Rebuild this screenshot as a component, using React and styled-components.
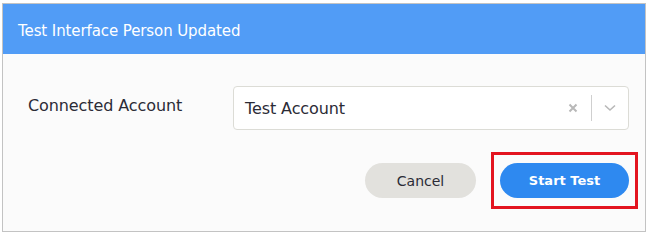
import React from "react";
import styled, { createGlobalStyle } from "styled-components";

const GlobalStyle = createGlobalStyle`
	body {
		margin: 0;
		background: #ffffff;
		font-family: "DejaVu Sans", "Open Sans", sans-serif;
	}
`;

const Panel = styled.div`
	margin: 3px 0 0 2px;
	width: 642px;
	height: 227px;
	border: 1px solid #c3c3c3;
	background: #fbfbfb;
	display: flex;
	flex-direction: column;
`;

const Header = styled.div`
	height: 50px;
	box-sizing: border-box;
	padding: 3px 0 0 15px;
	background: #519cf6;
	color: #ffffff;
	display: flex;
	align-items: center;
	font-size: 15px;
	letter-spacing: -0.1px;
`;

const Body = styled.div`
	padding: 32px 16px 0 25px;
	display: flex;
	flex-direction: column;
`;

const Field = styled.div`
	display: flex;
	align-items: center;
`;

const Label = styled.label`
	width: 205px;
	font-size: 16px;
	letter-spacing: -0.1px;
	color: #2b2b36;
	margin-top: -6px;
`;

const Select = styled.div`
	flex: 1;
	height: 42px;
	border: 1px solid #dcdcd6;
	border-radius: 4px;
	background: #ffffff;
	display: flex;
	align-items: center;
	padding-left: 11px;
`;

const Value = styled.span`
	flex: 1;
	font-size: 16px;
	letter-spacing: -0.1px;
	color: #2b2b36;
`;

const Indicator = styled.span`
	width: 36px;
	display: flex;
	align-items: center;
	justify-content: center;
	color: #b8b8b8;
`;

const Separator = styled.span`
	width: 1px;
	height: 26px;
	background: #cfcfcf;
`;

const Actions = styled.div`
	display: flex;
	justify-content: flex-end;
	align-items: center;
	gap: 24px;
	margin-top: 33px;
`;

const Button = styled.button`
	height: 35px;
	width: ${(p) => p.$width}px;
	border: none;
	border-radius: 18px;
	background: ${(p) => (p.$primary ? "#2e89f0" : "#e2e1dd")};
	color: ${(p) => (p.$primary ? "#ffffff" : "#2b2b36")};
	font-family: inherit;
	font-size: ${(p) => (p.$primary ? 13 : 14)}px;
	font-weight: ${(p) => (p.$primary ? 700 : 500)};
	cursor: pointer;
`;

const Highlight = styled.span`
	display: flex;
	border: 3px solid #e3141f;
	padding: 8px 6px;
	margin: -11px -9px;
`;

function App() {
	return (
		<>
			<GlobalStyle />
			<Panel>
				<Header>Test Interface Person Updated</Header>
				<Body>
					<Field>
						<Label>Connected Account</Label>
						<Select>
							<Value>Test Account</Value>
							<Indicator>
								<svg width="10" height="10" viewBox="0 0 10 10">
									<path d="M1.5 1.5 L8.5 8.5 M8.5 1.5 L1.5 8.5" stroke="currentColor" strokeWidth="2" />
								</svg>
							</Indicator>
							<Separator />
							<Indicator>
								<svg width="12" height="8" viewBox="0 0 12 8">
									<path d="M1 1.5 L6 6 L11 1.5" stroke="currentColor" strokeWidth="1.6" fill="none" />
								</svg>
							</Indicator>
						</Select>
					</Field>
					<Actions>
						<Button $width={111}>Cancel</Button>
						<Highlight>
							<Button $primary $width={129}>Start Test</Button>
						</Highlight>
					</Actions>
				</Body>
			</Panel>
		</>
	);
}

export default App;
